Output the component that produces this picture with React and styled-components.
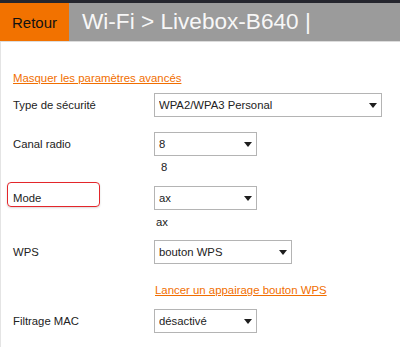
import React from "react";
import styled, { createGlobalStyle } from "styled-components";

const GlobalStyle = createGlobalStyle`
  html, body {
    margin: 0;
    padding: 0;
    background: #ffffff;
  }
  body {
    font-family: "Liberation Sans", Arial, sans-serif;
    color: #222222;
  }
`;

const Page = styled.div`
  width: 400px;
  height: 347px;
  overflow: hidden;
  border-top: 3px solid #25262e;
  box-sizing: border-box;
`;

const Header = styled.header`
  display: flex;
  height: 38px;
  background: #9b9b9b;
  border-bottom: 1px solid #dcdcdc;
`;

const BackButton = styled.button`
  width: 69px;
  border: none;
  margin: 0;
  padding: 0;
  background: #f27200;
  color: #111111;
  font-family: "Liberation Sans", Arial, sans-serif;
  font-size: 15px;
  cursor: pointer;
`;

const Title = styled.h1`
  margin: 0;
  padding-left: 13px;
  display: flex;
  align-items: center;
  font-weight: 400;
  font-size: 22.6px;
  color: #f7f7f7;
  white-space: nowrap;
`;

const Content = styled.main`
  display: flex;
  flex-direction: column;
  padding: 29px 0 0 12px;
  border-left: 1px solid #e4e4e4;
  min-height: 305px;
  box-sizing: border-box;
`;

const Link = styled.a`
  display: block;
  margin-top: ${(p) => p.$top || 0}px;
  margin-left: ${(p) => p.$indent || 0}px;
  font-size: 11.4px;
  line-height: 14px;
  color: #f16e00;
  text-decoration: underline;
  cursor: pointer;
`;

const Row = styled.div`
  display: grid;
  grid-template-columns: 141px auto;
  align-items: stretch;
  margin-top: ${(p) => p.$top}px;
`;

const Label = styled.label`
  position: relative;
  display: flex;
  align-items: center;
  font-size: 11.3px;
  color: #222222;

  ${(p) =>
    p.$highlight &&
    `
    &::before {
      content: "";
      position: absolute;
      left: -6px;
      top: -4px;
      width: 93px;
      height: 25px;
      box-sizing: border-box;
      border: 1.5px solid #e3262b;
      border-radius: 4px;
      box-shadow: 0 1px 2px rgba(0, 0, 0, 0.15);
    }
  `}
`;

const SelectWrap = styled.div`
  position: relative;
  width: ${(p) => p.$width}px;
  height: 24px;

  &::after {
    content: "";
    position: absolute;
    right: 5px;
    top: 10px;
    border-left: 4.5px solid transparent;
    border-right: 4.5px solid transparent;
    border-top: 5px solid #1e1e1e;
    pointer-events: none;
  }
`;

const Select = styled.select`
  appearance: none;
  -webkit-appearance: none;
  width: 100%;
  height: 100%;
  margin: 0;
  padding: 0 20px 0 4px;
  box-sizing: border-box;
  border: 1px solid #b4b4b4;
  border-radius: 0;
  background: #ffffff;
  font-family: "Liberation Sans", Arial, sans-serif;
  font-size: 11.3px;
  color: #222222;
  outline: none;
`;

const Value = styled.div`
  margin-top: ${(p) => p.$top}px;
  padding-left: ${(p) => p.$indent}px;
  font-size: 11.3px;
  line-height: 14px;
  color: #222222;
`;

const Field = ({ label, value, options, width, top, highlight }) => (
  <Row $top={top}>
    <Label $highlight={highlight}>{label}</Label>
    <SelectWrap $width={width}>
      <Select defaultValue={value}>
        {options.map((o) => (
          <option key={o}>{o}</option>
        ))}
      </Select>
    </SelectWrap>
  </Row>
);

export default function App() {
  return (
    <>
      <GlobalStyle />
      <Page>
        <Header>
          <BackButton>Retour</BackButton>
          <Title>Wi-Fi &gt; Livebox-B640 |</Title>
        </Header>
        <Content>
          <Link>Masquer les paramètres avancés</Link>
          <Field
            top={8}
            label="Type de sécurité"
            value="WPA2/WPA3 Personal"
            options={["WPA2/WPA3 Personal", "WPA2 Personal", "WPA3 Personal"]}
            width={228}
          />
          <Field
            top={15}
            label="Canal radio"
            value="8"
            options={["auto", "1", "6", "8", "11"]}
            width={103}
          />
          <Value $top={4} $indent={148}>8</Value>
          <Field
            top={12}
            highlight
            label="Mode"
            value="ax"
            options={["ax", "n", "g"]}
            width={103}
          />
          <Value $top={5} $indent={143}>ax</Value>
          <Field
            top={11}
            label="WPS"
            value="bouton WPS"
            options={["bouton WPS", "code PIN", "désactivé"]}
            width={138}
          />
          <Link $top={19} $indent={142}>Lancer un appairage bouton WPS</Link>
          <Field
            top={12}
            label="Filtrage MAC"
            value="désactivé"
            options={["désactivé", "activé"]}
            width={103}
          />
        </Content>
      </Page>
    </>
  );
}
